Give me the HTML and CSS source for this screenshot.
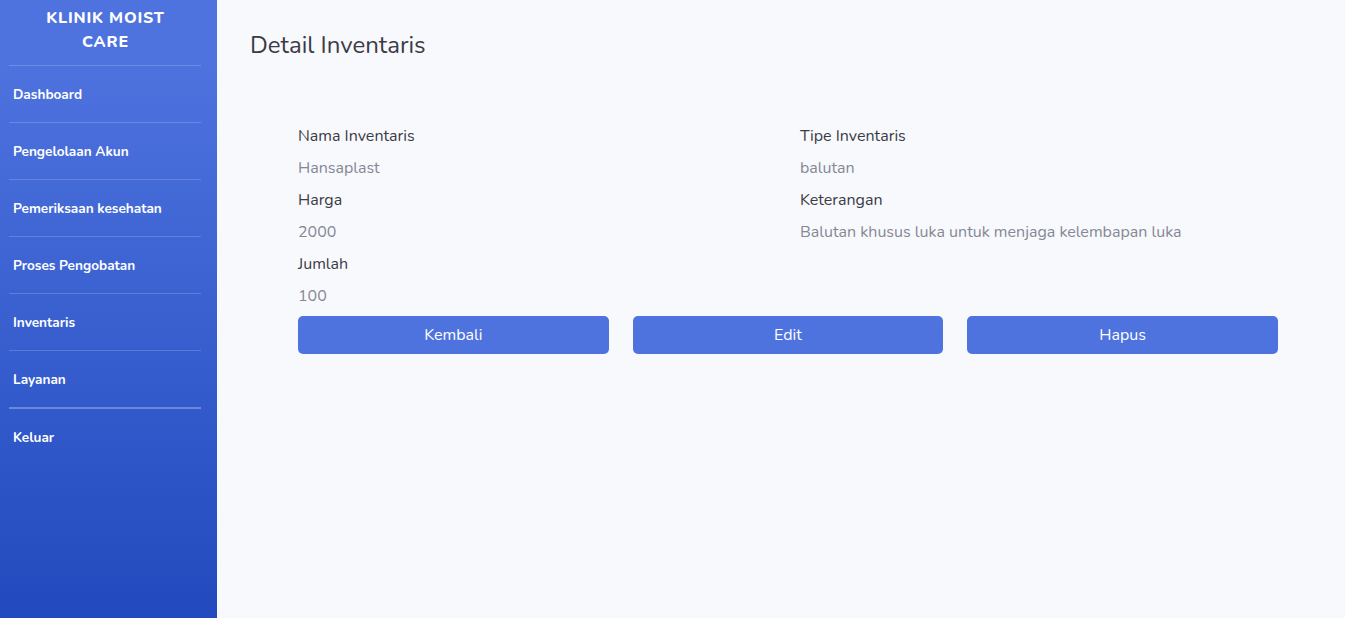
FILE: index.html
```html
<!DOCTYPE html>
<html lang="id">
<head>
<meta charset="utf-8">
<title>Detail Inventaris</title>
<link rel="stylesheet" href="styles.css">
</head>
<body>
<div class="wrapper">
  <aside class="sidebar">
    <div class="brand">KLINIK MOIST<br>CARE</div>
    <hr class="divider">
    <nav class="nav">
      <a class="nav-item" href="#">Dashboard</a>
      <hr class="divider">
      <a class="nav-item" href="#">Pengelolaan Akun</a>
      <hr class="divider">
      <a class="nav-item" href="#">Pemeriksaan kesehatan</a>
      <hr class="divider">
      <a class="nav-item" href="#">Proses Pengobatan</a>
      <hr class="divider">
      <a class="nav-item" href="#">Inventaris</a>
      <hr class="divider">
      <a class="nav-item" href="#">Layanan</a>
      <hr class="divider bright">
      <a class="nav-item" href="#">Keluar</a>
    </nav>
  </aside>
  <main class="main">
    <h1 class="title">Detail Inventaris</h1>
    <section class="detail">
      <div class="grid">
        <div class="col">
          <p class="label">Nama Inventaris</p>
          <p class="value">Hansaplast</p>
          <p class="label">Harga</p>
          <p class="value">2000</p>
          <p class="label">Jumlah</p>
          <p class="value">100</p>
        </div>
        <div class="col">
          <p class="label">Tipe Inventaris</p>
          <p class="value">balutan</p>
          <p class="label">Keterangan</p>
          <p class="value">Balutan khusus luka untuk menjaga kelembapan luka</p>
        </div>
      </div>
      <div class="actions">
        <button class="btn">Kembali</button>
        <button class="btn">Edit</button>
        <button class="btn">Hapus</button>
      </div>
    </section>
  </main>
</div>
</body>
</html>
```

FILE: styles.css
```css
* { box-sizing: border-box; }
html, body { margin: 0; height: 100%; }
body {
  font-family: "Nunito", "Lato", "Noto Sans", sans-serif;
  background: #f8f9fc;
  color: #3a3b45;
}
.wrapper {
  display: flex;
  min-height: 618px;
}
.sidebar {
  width: 217px;
  flex: 0 0 217px;
  background: linear-gradient(180deg, #4e73df 10%, #224abe 100%);
  color: #fff;
}
.brand {
  height: 65px;
  padding: 6px 6px 0 0;
  text-align: center;
  font-weight: 800;
  font-size: 16px;
  line-height: 24px;
  letter-spacing: 0.05rem;
}
.divider {
  margin: 0 16px 0 9px;
  border: 0;
  border-top: 1px solid rgba(255,255,255,0.18);
  height: 0;
}
.divider.bright { border-top: 2px solid rgba(255,255,255,0.28); }
.nav { display: flex; flex-direction: column; }
.nav-item {
  display: flex;
  align-items: center;
  height: 56px;
  padding-left: 13px;
  color: #fff;
  text-decoration: none;
  font-weight: 700;
  font-size: 13.6px;
}
.main {
  flex: 1;
  padding: 28px 67px 0 33px;
}
.title {
  margin: 0;
  font-weight: 400;
  font-size: 24px;
  line-height: 34px;
  color: #3a3b45;
}
.detail {
  margin-top: 62px;
  padding-left: 48px;
}
.grid {
  display: grid;
  grid-template-columns: 1fr 1fr;
  column-gap: 24px;
}
.label, .value {
  margin: 0 0 8px;
  font-size: 16px;
  line-height: 24px;
}
.label { color: #3a3b45; }
.value { color: #858796; }
.actions {
  display: grid;
  grid-template-columns: repeat(3, 1fr);
  column-gap: 24px;
  margin-top: 0;
}
.btn {
  height: 38px;
  border: 0;
  border-radius: 5px;
  background: #4e73df;
  color: #fff;
  font-family: inherit;
  font-size: 16px;
}
```
